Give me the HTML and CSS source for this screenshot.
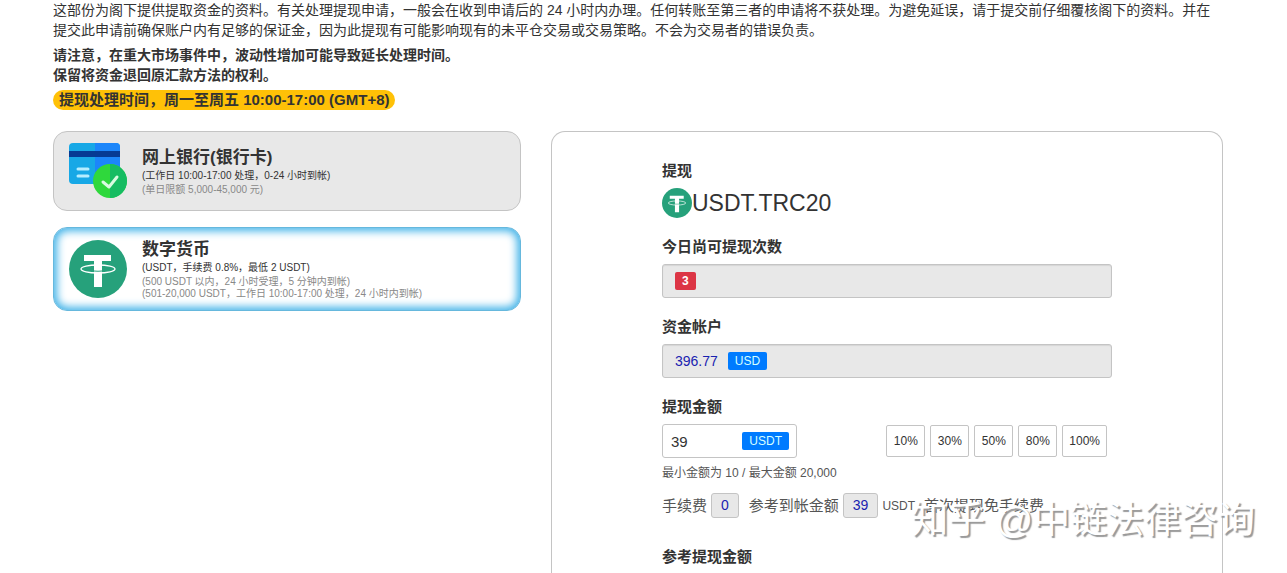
FILE: index.html
```html
<!DOCTYPE html>
<html lang="zh-CN">
<head>
    <meta charset="UTF-8">
    <meta name="viewport" content="width=device-width, initial-scale=1">
    <title>提现</title>
    <link rel="stylesheet" href="styles.css">
</head>
<body>

<svg class="sprite" aria-hidden="true">
    <symbol id="tether" viewBox="0 0 58 58">
        <circle cx="29" cy="29" r="29" fill="#26a17b"/>
        <path d="M15 15h27v6H33v26h-8V21H15z" fill="#fff"/>
        <ellipse cx="29" cy="29" rx="17" ry="4" fill="none" stroke="#fff" stroke-width="1.3"/>
        <path d="M25 31q4 .5 8 0" fill="none" stroke="#26a17b" stroke-width="1"/>
    </symbol>
</svg>

<div class="container">
    <div class="intro">
        <p>这部份为阁下提供提取资金的资料。有关处理提现申请，一般会在收到申请后的 24 小时内办理。任何转账至第三者的申请将不获处理。为避免延误，请于提交前仔细覆核阁下的资料。并在提交此申请前确保账户内有足够的保证金，因为此提现有可能影响现有的未平仓交易或交易策略。不会为交易者的错误负责。</p>
        <p class="notice">请注意，在重大市场事件中，波动性增加可能导致延长处理时间。<br>保留将资金退回原汇款方法的权利。</p>
        <span class="hours">提现处理时间，周一至周五 10:00-17:00 (GMT+8)</span>
    </div>

    <div class="content">
        <div class="methods">
            <button type="button" class="method">
                <svg class="method-icon" viewBox="0 0 58 58">
                    <rect y="1" width="51" height="41" rx="4" fill="#17a8e6"/>
                    <path d="M26 1h21a4 4 0 0 1 4 4v33a4 4 0 0 1-4 4H26z" fill="#1c86fa"/>
                    <path d="M0 9h51v6H0z" fill="#063a93"/>
                    <path d="M9 27h10M9 34h10" stroke="#b5edff" stroke-width="3" stroke-linecap="round"/>
                    <circle cx="41" cy="39" r="17" fill="#2fd83c"/>
                    <path d="M41 22a17 17 0 0 1 0 34z" fill="#16bc62"/>
                    <path d="M34 40l6 5 8-10" fill="none" stroke="#d8fbe0" stroke-width="3" stroke-linecap="round" stroke-linejoin="round"/>
                </svg>
                <span class="method-text">
                    <strong>网上银行(银行卡)</strong>
                    <span>(工作日 10:00-17:00 处理，0-24 小时到帐)</span>
                    <small>(单日限额 5,000-45,000 元)</small>
                </span>
            </button>
            <button type="button" class="method active">
                <svg class="method-icon"><use href="#tether"/></svg>
                <span class="method-text">
                    <strong>数字货币</strong>
                    <span>(USDT，手续费 0.8%，最低 2 USDT)</span>
                    <small>(500 USDT 以内，24 小时受理，5 分钟内到帐)<br>(501-20,000 USDT，工作日 10:00-17:00 处理，24 小时内到帐)</small>
                </span>
            </button>
        </div>

        <div class="panel">
            <form class="form">
                <div class="group">
                    <h2 class="label">提现</h2>
                    <div class="coin"><svg class="coin-icon"><use href="#tether"/></svg>USDT.TRC20</div>
                </div>
                <div class="group">
                    <label class="label" for="times">今日尚可提现次数</label>
                    <output class="field" id="times"><span class="badge red">3</span></output>
                </div>
                <div class="group">
                    <label class="label" for="balance">资金帐户</label>
                    <output class="field" id="balance">396.77 <span class="badge">USD</span></output>
                </div>
                <div class="group">
                    <label class="label" for="amount">提现金额</label>
                    <div class="amount-row">
                        <div class="amount">
                            <input type="text" id="amount" value="39">
                            <span class="badge">USDT</span>
                        </div>
                        <div class="percents">
                            <button type="button">10%</button>
                            <button type="button">30%</button>
                            <button type="button">50%</button>
                            <button type="button">80%</button>
                            <button type="button">100%</button>
                        </div>
                    </div>
                    <p class="help">最小金额为 10 / 最大金额 20,000</p>
                    <div class="fees">
                        <label for="fee">手续费</label>
                        <output id="fee">0</output>
                        <label class="second" for="received">参考到帐金额</label>
                        <output id="received">39</output>
                        <span class="unit">USDT</span>
                        <span>首次提现免手续费</span>
                    </div>
                </div>
                <div class="group last">
                    <h2 class="label">参考提现金额</h2>
                </div>
            </form>
        </div>
    </div>
</div>

<div class="watermark">知乎 @中链法律咨询</div>

</body>
</html>
```
FILE: styles.css
```css
* {
    box-sizing: border-box;
}

body {
    margin: 0;
    background: #fff;
    color: #333;
    font-family: "Liberation Sans", "Noto Sans CJK SC", sans-serif;
    font-size: 14px;
    line-height: 20px;
}

button, input {
    font-family: inherit;
    color: inherit;
}

.sprite {
    position: absolute;
    width: 0;
    height: 0;
}

.container {
    display: flex;
    flex-direction: column;
    min-height: 100vh;
    padding: 0 64px 0 53px;
}

.intro p {
    margin: 0 0 5px;
}

.intro .notice {
    font-weight: bold;
}

.hours {
    display: inline-block;
    padding: 0 6px;
    border-radius: 10px;
    background: #ffc107;
    font-size: 15px;
    font-weight: bold;
    line-height: 20px;
}

.content {
    flex: 1;
    display: grid;
    grid-template-columns: 39fr 56fr;
    gap: 30px;
    margin-top: 21px;
}

.methods {
    display: flex;
    flex-direction: column;
    gap: 16px;
}

.method {
    display: flex;
    align-items: center;
    gap: 15px;
    min-height: 80px;
    padding: 0 15px;
    border: 1px solid #c4c4c4;
    border-radius: 14px;
    background: #e8e8e8;
    text-align: left;
    cursor: pointer;
}

.method.active {
    min-height: 84px;
    border-color: #66b8dd;
    background: #fff;
    box-shadow: inset 0 0 8px 3px #3fb2e8;
}

.method-icon {
    flex: none;
    width: 58px;
    height: 58px;
}

.method-text {
    display: flex;
    flex-direction: column;
    font-size: 10px;
    line-height: 12px;
}

.method-text strong {
    font-size: 17px;
    line-height: 24px;
}

.method-text small {
    margin-top: 2px;
    font-size: 10px;
    color: #888;
}

.panel {
    padding: 29px 20px 0;
    border: 1px solid #c4c4c4;
    border-bottom: 0;
    border-radius: 14px 14px 0 0;
}

.form {
    max-width: 450px;
    margin: 0 auto;
}

.group {
    margin-bottom: 19px;
}

.group.last {
    margin: 29px 0 0;
}

.label {
    display: block;
    margin: 0 0 7px;
    font-size: 15px;
    font-weight: bold;
    line-height: 20px;
}

.last .label {
    margin: 0;
}

.coin {
    display: flex;
    align-items: center;
    height: 30px;
    font-size: 23px;
}

.coin-icon {
    width: 30px;
    height: 30px;
}

.field {
    display: flex;
    align-items: center;
    gap: 10px;
    height: 34px;
    padding: 0 12px;
    border: 1px solid #c4c4c4;
    border-radius: 3px;
    background: #e8e8e8;
    box-shadow: inset 0 1px 1px rgba(0, 0, 0, 0.08);
    color: #1a22b0;
}

.badge {
    padding: 0 7px;
    border-radius: 2px;
    background: #007bff;
    color: #d5ffff;
    font-size: 12px;
    line-height: 18px;
}

.badge.red {
    background: #dc3545;
    color: #fff;
    font-weight: bold;
}

.amount-row {
    display: flex;
    align-items: center;
    justify-content: space-between;
    padding-right: 5px;
}

.amount {
    display: flex;
    align-items: center;
    width: 135px;
    height: 34px;
    padding: 0 7px 0 8px;
    border: 1px solid #c4c4c4;
    border-radius: 3px;
}

.amount input {
    flex: 1;
    min-width: 0;
    padding: 0;
    border: 0;
    outline: 0;
    background: none;
    font-size: 15px;
}

.percents {
    display: flex;
    gap: 5px;
}

.percents button {
    min-width: 39px;
    height: 32px;
    padding: 0 6px;
    border: 1px solid #c4c4c4;
    border-radius: 2px;
    background: #fff;
    font-size: 12px;
}

.help {
    margin: 5px 0 10px;
    color: #555;
    font-size: 12px;
}

.fees {
    display: flex;
    align-items: center;
    gap: 4px;
    color: #555;
    font-size: 15px;
    white-space: nowrap;
}

.fees output {
    padding: 0 9px;
    border: 1px solid #c4c4c4;
    border-radius: 3px;
    background: #e8e8e8;
    color: #1a22b0;
    font-size: 14px;
    line-height: 23px;
}

.fees .second {
    margin-left: 6px;
}

.fees .unit {
    margin-right: 5px;
    font-size: 12px;
}

/* lies over the page */
.watermark {
    position: absolute;
    right: 32px;
    bottom: 26px;
    color: #fff;
    font-size: 37px;
    line-height: 52px;
    text-shadow: 2px 2px 1px #999;
    pointer-events: none;
}
```
